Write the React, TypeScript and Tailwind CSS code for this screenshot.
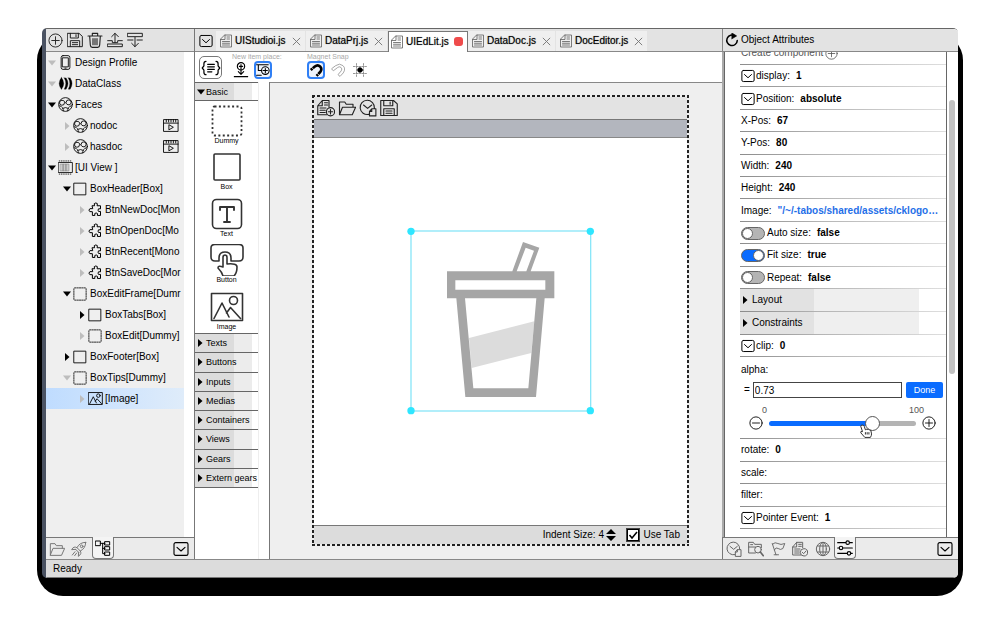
import React from "react";

type SvgProps = { className?: string; children?: React.ReactNode; box?: string; sw?: number };

function Svg({ className = "size-4", children, box = "0 0 24 24", sw = 1.5 }: SvgProps) {
  return (
    <svg viewBox={box} className={`shrink-0 ${className}`} fill="none" stroke="currentColor" strokeWidth={sw} strokeLinejoin="round" strokeLinecap="round" aria-hidden="true">
      {children}
    </svg>
  );
}

const PlusCircle = ({ className }: SvgProps) => (
  <Svg className={className}><circle cx="12" cy="12" r="10.500" /><path d="M12 6v12M6 12h12" /></Svg>
);
const MinusCircle = ({ className }: SvgProps) => (
  <Svg className={className}><circle cx="12" cy="12" r="10.500" /><path d="M6 12h12" /></Svg>
);
const Save = ({ className }: SvgProps) => (
  <Svg className={className}><path d="M1 2h17l5 4.500V22H1zM5 2v7h12V2M13.500 4v3M5 22v-9h14v9M8 16h8M8 19h8" /></Svg>
);
const Trash = ({ className }: SvgProps) => (
  <Svg className={className} sw={1.700}><path d="M1.500 6h21M8 6V2h8v4M4 6l1 14Q5.200 23 8 23h8Q18.800 23 19 20L20 6M9 10v9M12 10v9M15 10v9" /></Svg>
);
const InsertAbove = ({ className }: SvgProps) => (
  <Svg className={className}><path d="M12 16V2M7 7l5-5 5 5M1 13h7v3h8v-3h7M1 18h22v4H1z" /></Svg>
);
const InsertBelow = ({ className }: SvgProps) => (
  <Svg className={className}><path d="M1 2h22v5H1zM1 12h8M15 12h8M12 8v14M7 17l5 5 5-5" /></Svg>
);
const Phone = ({ className }: SvgProps) => (
  <Svg className={className} sw={1.400}><rect x="5" y="1" width="14" height="22" rx="3" /><path d="M7.500 4.500h9v14.500h-9zM11 21h2" /></Svg>
);
const DataClassIcon = ({ className }: SvgProps) => (
  <Svg className={className} sw={0.500}>
    <path fill="currentColor" d="M5.500 2.500Q13 12 5.500 21.500Q-2 12 5.500 2.500zM10 3h3q6 9 0 18h-3q5-9 0-18zM16.500 3h3q6 9 0 18h-3q5-9 0-18z" />
  </Svg>
);
const Face = ({ className }: SvgProps) => (
  <Svg className={className} sw={1.400}><circle cx="12" cy="12" r="11" /><path d="M10.500 9a4 4 0 1 1-2.500-3.500q2.500 1 4 3.500t4 3.500a4 4 0 1 0-3-4M2.500 14q3 .5 4.500 3t1.500 5M21.500 14q-3 .5-4.500 3t-1.500 5M8 18q4-2.500 8 0" /></Svg>
);
const Clip = ({ className }: SvgProps) => (
  <Svg className={className} box="0 0 26 22"><path d="M1 1h24v20H1zM1 7h24M5 1v4M9 1v4M13 1v4M17 1v4M21 1v4M10 10l7 4-7 4z" /></Svg>
);
const ViewIcon = ({ className }: SvgProps) => (
  <Svg className={className} sw={1.300}>
    <rect x="1" y="4" width="22" height="16" /><path fill="#ccc" stroke="#888" strokeWidth="1" d="M4 6.500h4.500v11H4zM8.500 6.500H13v11H8.500zM13 6.500h4.500v11H13z" /><path d="M2 1.500h20M2 22.500h20" strokeDasharray="1 2.500" />
  </Svg>
);
const BoxIcon = ({ className }: SvgProps) => (
  <Svg className={className}><rect x="2" y="2" width="20" height="20" /></Svg>
);
const DummyIcon = ({ className }: SvgProps) => (
  <Svg className={className} sw={1.400}><rect x="1.500" y="1.500" width="21" height="21" rx="1.500" strokeDasharray="2.200 1.800" /></Svg>
);
const Puzzle = ({ className }: SvgProps) => (
  <Svg className={className} sw={1.600}>
    <path d="M7 6h3.500Q8.500 1.500 12.500 1.500T14.500 6H20v5q-4-1.500-4 2t4 2v6.500h-5q1.500-4-2-4t-2 4H7v-6q-5.500 1-5.500-2.500T7 10.500z" />
  </Svg>
);
const ImageIcon = ({ className, sw = 2 }: SvgProps) => (
  <Svg className={className} box="0 0 34 30" sw={sw}><path d="M1.500 1.500h31v27h-31zM4 26.500L12 11l7 14M16.500 21l4-5.500 10 11" /><circle cx="23.500" cy="8.500" r="4" /></Svg>
);
const Chevron = ({ className }: SvgProps) => (
  <Svg className={className} sw={1.700}><rect x="1.500" y="2.500" width="21" height="19" rx="2.500" /><path d="M6 9.500l6 5.500 6-5.500" /></Svg>
);
const DocTab = ({ className }: SvgProps) => (
  <Svg className={className} box="0 0 24 26" sw={1.700}><path d="M10 1h13v24H1V10zM10 1v9H1M14 5h5M14 9h5M5 14h14M5 17.500h14M5 21h14" /></Svg>
);
const Cross = ({ className }: SvgProps) => (
  <Svg className={className} sw={2.500}><path d="M3 3l18 18M21 3L3 21" /></Svg>
);
const DocAdd = ({ className }: SvgProps) => (
  <Svg className={className}><path d="M13 21H1V9l6-7h9v8M7 2v7H1M10 5h4M10 8h4M4 12h8M4 15h7M4 18h7" /><circle cx="18" cy="17" r="5.500" /><path d="M18 14v6M15 17h6" /></Svg>
);
const Folder = ({ className }: SvgProps) => (
  <Svg className={className}><path d="M2 21V4h7l2 3h9v4M2 21l4-10h17.500l-4.500 10z" /></Svg>
);
const Recent = ({ className }: SvgProps) => (
  <Svg className={className}><path d="M13 20.500A9.500 9.500 0 1 1 20.500 12M6 8l5.500 4.500L17 8M14 22.500v-6l3-3.500h5.500v9.500zM17 13v3.500h-3" /></Svg>
);
const Rocket = ({ className }: SvgProps) => (
  <Svg className={className}><path d="M22 2Q13 2 9 10l5 5q8-4 8-13zM9 10Q4 7 1 13l6-.5M14 15q3 4-3 8l.5-6M7 12.500l4.500 4.500M6 16l-4 5M8.500 18l-3 4" /><circle cx="16" cy="8" r="2" /></Svg>
);
const TreeIcon = ({ className }: SvgProps) => (
  <Svg className={className} sw={1.500}><path d="M1 1.500h7v7H1zM15 2.500h7v5h-7zM15 10h7v5h-7zM15 18h7v5h-7zM8 5h7M11.500 5v15.500H15M11.500 12.500H15" /></Svg>
);
const FolderSearch = ({ className }: SvgProps) => (
  <Svg className={className}><path d="M11 18H1V2h7l2 3h10v5M1 9h10M4 5.500h3" /><circle cx="15" cy="13" r="5" /><path d="M18.500 16.500L23 22" strokeWidth="2.500" /></Svg>
);
const Flag = ({ className }: SvgProps) => (
  <Svg className={className}><path d="M2 4l6 18M5 22h7M2.500 5q4-4 8.500-1t11 0l-3 8q-4 3-7.500 0t-6 2" /></Svg>
);
const DocCheck = ({ className }: SvgProps) => (
  <Svg className={className}><path d="M13 21H1V9l6-7h9v8M7 2v7H1M10 5h4M10 8h4M4 12h8M4 15h7M4 18h7" /><circle cx="18" cy="17" r="5.500" /><path d="M15.500 17l2 2 3.500-4" /></Svg>
);
const Globe = ({ className }: SvgProps) => (
  <Svg className={className}><circle cx="12" cy="12" r="10" /><ellipse cx="12" cy="12" rx="5" ry="10" /><path d="M12 2v20M3.500 7.500h17M3.500 16.500h17" /></Svg>
);
const Sliders = ({ className }: SvgProps) => (
  <Svg className={className} sw={1.700}><path d="M1 4h12M19 4h4M1 12h2M9 12h14M1 20h14M21 20h2" /><circle cx="16" cy="4" r="2.600" /><circle cx="6" cy="12" r="2.600" /><circle cx="18" cy="20" r="2.600" /></Svg>
);
const Magnet = ({ className, sw }: SvgProps) => (
  <Svg className={className} sw={sw}><path d="M1.500 9.500L8 4.500q7-5 12.500 0t.5 12.500l-5.500 6-3.500-3 5.500-6.500q2.500-3.500-.5-6t-6 .5L4.500 13z" /></Svg>
);
const BoldMagnet = ({ className }: SvgProps) => (
  <Svg className={className} sw={4.500}><path strokeLinecap="butt" d="M3 12l7-6q5-4 9 0t.5 9L13 22" /><path stroke="#fff" strokeWidth="1.300" d="M4.500 7.500l4 4M12.500 16.500l4.500 4" /></Svg>
);

function Arrow({ open, faint }: { open?: boolean; faint?: boolean }) {
  return (
    <svg viewBox="0 0 10 10" className={`size-[10px] shrink-0 ${faint ? "fill-[#bdbdbd]" : "fill-black"}`} aria-hidden="true">
      {open ? <path d="M1 2.500h8L5 7.500z" /> : <path d="M3 1v8l4.500-4z" />}
    </svg>
  );
}

type Node = { label: string; level: 0 | 1 | 2; icon: React.FC<SvgProps>; open?: boolean; faint?: boolean; clip?: boolean; selected?: boolean };

const tree: Node[] = [
  { label: "Design Profile", level: 0, icon: Phone, open: true, faint: true },
  { label: "DataClass", level: 0, icon: DataClassIcon, open: true, faint: true },
  { label: "Faces", level: 0, icon: Face, open: true },
  { label: "nodoc", level: 1, icon: Face, faint: true, clip: true },
  { label: "hasdoc", level: 1, icon: Face, faint: true, clip: true },
  { label: "[UI View ]", level: 0, icon: ViewIcon, open: true },
  { label: "BoxHeader[Box]", level: 1, icon: BoxIcon, open: true },
  { label: "BtnNewDoc[Mon", level: 2, icon: Puzzle, faint: true },
  { label: "BtnOpenDoc[Mo", level: 2, icon: Puzzle, faint: true },
  { label: "BtnRecent[Mono", level: 2, icon: Puzzle, faint: true },
  { label: "BtnSaveDoc[Mor", level: 2, icon: Puzzle, faint: true },
  { label: "BoxEditFrame[Dumr", level: 1, icon: DummyIcon, open: true },
  { label: "BoxTabs[Box]", level: 2, icon: BoxIcon },
  { label: "BoxEdit[Dummy]", level: 2, icon: DummyIcon, faint: true },
  { label: "BoxFooter[Box]", level: 1, icon: BoxIcon },
  { label: "BoxTips[Dummy]", level: 1, icon: DummyIcon, open: true, faint: true },
  { label: "[Image]", level: 2, icon: ImageIcon, faint: true, selected: true },
];

const indent = { 0: "pl-[1px]", 1: "pl-4", 2: "pl-[31px]" };

function IconButton({ label, children, className = "" }: { label: string; children: React.ReactNode; className?: string }) {
  return <button type="button" aria-label={label} className={`flex items-center justify-center ${className}`}>{children}</button>;
}

function ActiveTab({ label, children }: { label: string; children: React.ReactNode }) {
  return (
    <IconButton label={label} className="-mt-px h-[22px] w-[22px] self-start rounded-b-[4px] border border-t-0 border-[#777] bg-[#f4f4f4]">
      {children}
    </IconButton>
  );
}

function LeftPanel() {
  return (
    <aside className="flex min-h-0 flex-col border-r border-[#777] bg-[#efefef]">
      <div className="flex h-[23px] shrink-0 items-center gap-1 border-b border-[#888] bg-[#e3e3e3] pl-[2px] text-[#222]">
        <IconButton label="Add"><PlusCircle className="size-[15px]" /></IconButton>
        <IconButton label="Save"><Save className="size-4" /></IconButton>
        <IconButton label="Delete"><Trash className="size-4" /></IconButton>
        <IconButton label="Insert above"><InsertAbove className="size-4" /></IconButton>
        <IconButton label="Insert below"><InsertBelow className="size-4" /></IconButton>
      </div>
      <div className="min-h-0 flex-1 overflow-hidden bg-white pr-[10px]">
        <ul className="h-full bg-[#efefef]">
          {tree.map((n) => {
            const Icon = n.icon;
            return (
              <li key={n.label} className={`flex h-[21px] items-center whitespace-nowrap ${indent[n.level]} ${n.selected ? "bg-linear-to-r from-[#bfdcff] to-[#dfecfa]" : ""}`}>
                <Arrow open={n.open} faint={n.faint} />
                <span className="flex w-4 shrink-0 justify-center"><Icon className={n.icon === BoxIcon || n.icon === DummyIcon ? "size-[14px]" : "size-[15px]"} /></span>
                <span className="ml-[2px]">{n.label}</span>
                {n.clip && <IconButton label={`Play ${n.label}`} className="mr-[5px] ml-auto"><Clip className="h-[13px] w-4" /></IconButton>}
              </li>
            );
          })}
        </ul>
      </div>
      <div className="flex h-[22px] shrink-0 items-center border-t border-[#777] bg-[#ebebeb] pl-[2px]">
        <IconButton label="Files" className="w-[18px] text-[#777]"><Folder className="size-4" /></IconButton>
        <IconButton label="Launch" className="mx-1 w-[18px] text-[#777]"><Rocket className="size-4" /></IconButton>
        <ActiveTab label="Structure"><TreeIcon className="size-4" /></ActiveTab>
        <IconButton label="More" className="mr-[5px] ml-auto"><Chevron className="size-4" /></IconButton>
      </div>
    </aside>
  );
}

const files = [
  { name: "UIStudioi.js", width: "w-[90px]" },
  { name: "DataPrj.js", width: "w-[82px]" },
  { name: "UIEdLit.js", width: "w-[80px]", active: true },
  { name: "DataDoc.js", width: "w-[88px]" },
  { name: "DocEditor.js", width: "w-[92px]" },
];

function FileTabs() {
  return (
    <div className="flex h-[23px] shrink-0 items-end border-b border-[#888] bg-[#e3e3e3]">
      <IconButton label="Open file list" className="h-[21px] w-[21px]"><Chevron className="size-[14px]" /></IconButton>
      {files.map((f) => (
        <div key={f.name} className={`flex items-center pr-[4px] ${f.width} ${f.active ? "-mb-px h-[21px] border border-b-0 border-[#777] bg-white pb-px pl-[2px]" : "h-[20px] border-r border-[#e3e3e3] bg-[#efefef] pl-[4px]"}`}>
          <DocTab className="h-[14px] w-3 text-[#666]" />
          <button type="button" className="ml-[3px] [text-shadow:0_0_1px_#0008]">{f.name}</button>
          <IconButton label={`Close ${f.name}`} className="ml-auto">
            {f.active ? <span className="block size-[9px] rounded-[3px] bg-[#ef4b4b]" /> : <Cross className="size-[9px] text-[#777]" />}
          </IconButton>
        </div>
      ))}
    </div>
  );
}

function Toolbar() {
  return (
    <div className="flex h-[30px] shrink-0 bg-white pl-1">
      <IconButton label="Source" className="mt-1 size-[23px] rounded-[5px] border border-[#777]">
        <Svg className="size-5" sw={1.500}><path d="M6 4Q3.500 4 3.500 7v2.500L1.500 12l2 2.500V17q0 3 2.500 3M18 4q2.500 0 2.500 3v2.500l2 2.500-2 2.500V17q0 3-2.500 3M8 7.500h8M8 10.500h8M8 13.500h8M8 16.500h5" /></Svg>
      </IconButton>
      <div className="ml-[10px] w-[75px] pt-px">
        <div className="h-2 text-[7px] leading-[8px] whitespace-nowrap text-[#a9a9a9]">New item place:</div>
        <div className="flex gap-[4px]">
          <IconButton label="Place at centre" className="h-[18px] w-[18px]">
            <Svg className="size-[16px]" sw={1.700}><circle cx="12" cy="6.500" r="5.500" /><path d="M12 4v9M9.500 6.500h5M12 13v4M8 14.500l4 4 4-4M2 22h20" /></Svg>
          </IconButton>
          <IconButton label="Place inside" className="size-[18px] rounded-[4px] border-2 border-[#2f7ff5] bg-[#eef3fb]">
            <Svg className="size-[14px]" sw={1.800}><path d="M1 3h20M4 3v10h6M1 21h8" /><circle cx="16" cy="13" r="6.500" /><path d="M16 9.500v7M12.500 13h7" /></Svg>
          </IconButton>
        </div>
      </div>
      <div className="pt-px">
        <div className="h-2 text-[7px] leading-[8px] whitespace-nowrap text-[#a9a9a9]">Magnet Snap</div>
        <div className="flex gap-[4px]">
          <IconButton label="Strong snap" className="size-[18px] rounded-[4px] border-2 border-[#2f7ff5] bg-[#eef3fb]"><BoldMagnet className="size-[14px]" /></IconButton>
          <IconButton label="Weak snap" className="size-[18px] text-[#999]"><Magnet className="size-[14px]" sw={1.500} /></IconButton>
          <IconButton label="Grid snap" className="size-[18px]">
            <Svg className="size-[14px]" sw={1.500}><path stroke="#888" d="M0 6h24M0 18h24M6 1v22M18 1v22" strokeDasharray="3 2" /><circle cx="12" cy="12" r="4" fill="currentColor" /></Svg>
          </IconButton>
        </div>
      </div>
    </div>
  );
}

const paletteItems = [
  { name: "Dummy", icon: <Svg className="size-8" box="0 0 32 32" sw={1.800}><rect x="1.500" y="1.500" width="29" height="29" rx="2" strokeDasharray="2 2.400" strokeLinecap="butt" /></Svg> },
  { name: "Box", icon: <Svg className="size-8" box="0 0 32 32" sw={1.600}><rect x="3" y="3" width="26" height="26" rx="1" /></Svg> },
  { name: "Text", icon: <Svg className="size-8" box="0 0 32 32" sw={1.600}><rect x="1.500" y="1.500" width="29" height="29" rx="4" /><path d="M9 12V9h14v3M16 9v15M13 24h6" strokeWidth="1.900" /></Svg> },
  { name: "Button", icon: <Svg className="h-8 w-[34px]" box="0 0 34 32" sw={1.600}><path d="M9 17H5q-4 0-4-4V4q0-3.500 4-3.500h24q4 0 4 3.500v9q0 4-4 4h-7M9 17v-3q0-6 6-6t6 6v3M13 23V13.500q0-2.500 2-2.500t2 2.500V20q10-1 10 3 0 6-3 9H13q-1-4-5-8 0-3 5-1z" /></Svg> },
  { name: "Image", icon: <ImageIcon className="h-[30px] w-[34px]" sw={1.600} /> },
];

const sections = ["Texts", "Buttons", "Inputs", "Medias", "Containers", "Views", "Gears", "Extern gears"];
const headFill = "bg-[linear-gradient(to_right,#dcdcdc_62%,#ececec_62%_90%,#fff_90%)]";

function Palette() {
  return (
    <div className="flex w-[75px] shrink-0 flex-col border-r border-[#777] bg-white pr-[10px]">
      <div className="flex-1 border-r border-[#eee] text-[9px]">
        <button type="button" aria-expanded="true" className={`flex h-[19px] w-full items-center border-y border-[#666] pl-px ${headFill}`}>
          <Arrow open /><span>Basic</span>
        </button>
        <div className="flex h-[232px] flex-col">
          {paletteItems.map((p) => (
            <button key={p.name} type="button" className="flex w-full flex-1 flex-col items-center pt-[4px] text-[#333]">
              <span className="flex h-8 items-center">{p.icon}</span>
              <span className="text-[7px] leading-[8px] text-black">{p.name}</span>
            </button>
          ))}
        </div>
        <div className="flex h-[155px] flex-col border-t border-[#666]">
          {sections.map((s) => (
            <button key={s} type="button" aria-expanded="false" className={`flex w-full flex-1 items-center border-b border-[#666] whitespace-nowrap ${headFill}`}>
              <Arrow /><span className="ml-px">{s}</span>
            </button>
          ))}
        </div>
      </div>
    </div>
  );
}

function Drink() {
  return (
    <svg viewBox="17 17 567 567" className="size-[189px]" role="img" aria-label="Drink cup">
      <path fill="#dcdcdc" d="M206 353L402 303L393 398L214 443z" />
      <path fill="#a6a6a6" fillRule="evenodd" d="M140 153H336L368 65L417 82L391 153H462V234H433L407 530H195L168 234H140zM165 180V208H435V180zM349 153H378L401 91L376 82zM194 234L219 504H384L408 234z" />
      <rect x="32" y="32" width="539" height="540" fill="none" stroke="#8ae6f8" strokeWidth="4" />
      <g fill="#2fe6ff">
        <circle cx="32" cy="33" r="11" /><circle cx="570" cy="33" r="11" /><circle cx="32" cy="571" r="11" /><circle cx="570" cy="571" r="11" />
      </g>
    </svg>
  );
}

const dashedFrame =
  "bg-[repeating-linear-gradient(to_right,#222_0_3px,#eee_3px_5px),repeating-linear-gradient(to_right,#222_0_3px,#eee_3px_5px),repeating-linear-gradient(to_bottom,#222_0_3px,#eee_3px_5px),repeating-linear-gradient(to_bottom,#222_0_3px,#eee_3px_5px)] bg-[length:100%_2px,100%_2px,2px_100%,2px_100%] bg-[position:top,bottom,left,right] bg-no-repeat";

function Canvas() {
  return (
    <div className="flex min-w-0 flex-1 flex-col border-t border-[#888] bg-[#efefef] pt-[12px] pr-[33px] pb-[13px] pl-[42px]">
      <div className={`flex flex-1 flex-col p-[2px] ${dashedFrame}`}>
        <div className="flex h-[23px] shrink-0 items-center gap-[3px] border-b border-[#777] bg-[#e3e3e3] pl-[3px] text-[#222]">
          <IconButton label="New document"><DocAdd className="size-[18px]" /></IconButton>
          <IconButton label="Open document"><Folder className="size-[18px]" /></IconButton>
          <IconButton label="Recent documents"><Recent className="size-[18px]" /></IconButton>
          <IconButton label="Save document"><Save className="size-[18px]" /></IconButton>
        </div>
        <div className="h-[18px] shrink-0 border-b border-[#888] bg-[#b3b6be]" />
        <div className="flex flex-1 justify-center bg-white pt-[88px]"><Drink /></div>
        <div className="flex h-[19px] shrink-0 items-center justify-end border-t border-[#777] bg-[#dcdcdc] pr-[7px]">
          <label htmlFor="indent">Indent Size:</label>
          <input id="indent" type="text" inputMode="numeric" defaultValue="4" className="ml-[3px] w-[7px] bg-transparent" />
          <svg viewBox="0 0 10 12" className="ml-px h-3 w-[10px]" aria-hidden="true"><path d="M0 5L5 0l5 5zM0 7h10l-5 5z" /></svg>
          <label className="ml-[11px] flex items-center gap-1">
            <span className="relative flex size-3">
              <input type="checkbox" defaultChecked className="peer size-3 appearance-none border border-black bg-white outline outline-[#444]" />
              <svg viewBox="0 0 12 12" className="pointer-events-none absolute inset-0 hidden size-3 peer-checked:block" fill="none" stroke="#000" strokeWidth="1.500" aria-hidden="true"><path d="M2.500 6l2.500 3 5-6" /></svg>
            </span>
            Use Tab
          </label>
        </div>
      </div>
    </div>
  );
}

const rowLine = "bg-[linear-gradient(to_right,#8c8c8c,#b5b5b5_40%,#dedede)] bg-[length:100%_1px] bg-bottom bg-no-repeat";

function Attr({ name, value, menu, link }: { name: string; value?: string; menu?: boolean; link?: boolean }) {
  return (
    <div className={`flex min-h-0 flex-1 items-center pl-px whitespace-nowrap ${rowLine}`}>
      {menu && <IconButton label={`Choose ${name}`} className="mr-px"><Chevron className="size-[14px]" /></IconButton>}
      <span>{name}:</span>
      {value && (link ? <a href="#image" className="ml-[6px] font-bold text-[#1f6fe8]">{value}</a> : <b className="ml-[6px]">{value}</b>)}
    </div>
  );
}

function Toggle({ name, on }: { name: string; on?: boolean }) {
  return (
    <label className={`flex min-h-0 flex-1 items-center pl-px whitespace-nowrap ${rowLine}`}>
      <input
        type="checkbox"
        defaultChecked={on}
        className="mr-[2px] h-[13px] w-6 appearance-none rounded-full border border-[#666] bg-[#b4b4b4] before:block before:size-[11px] before:rounded-full before:border before:border-[#666] before:bg-white checked:bg-[#0a6cff] checked:before:ml-[11px]"
      />
      <span>{name}:</span>
      <b className="ml-[6px]">{on ? "true" : "false"}</b>
    </label>
  );
}

function Group({ name }: { name: string }) {
  return (
    <div className={`h-[23px] pb-px ${rowLine}`}>
      <button type="button" aria-expanded="false" className="flex h-full w-full items-center bg-[linear-gradient(to_right,#e2e2e2_36%,#efefef_36%_87%,#fff_87%)]">
        <Arrow /><span className="ml-[2px]">{name}</span>
      </button>
    </div>
  );
}

function RightPanel() {
  return (
    <aside className="flex min-h-0 flex-col bg-white">
      <div className="flex h-[23px] shrink-0 items-center border-b border-l border-[#888] bg-[#e3e3e3] pl-[2px]">
        <IconButton label="Refresh">
          <Svg className="size-[14px]" sw={2.600}><path d="M17 5A9 9 0 1 0 21 13" /><path fill="currentColor" strokeWidth="1" d="M12 0l8 5-8 5z" /></Svg>
        </IconButton>
        <h2 className="ml-[2px]">Object Attributes</h2>
      </div>
      <div className="flex min-h-0 flex-1 border-l-2 border-[#aaa]">
        <div className="min-h-0 flex-1 overflow-hidden border-x border-[#666] pl-[15px]">
          <div className="-mt-[10px] flex h-[22px] items-center pl-px text-[#555]">
            Create component<IconButton label="Create component" className="ml-[2px]"><PlusCircle className="size-[13px]" /></IconButton>
          </div>
          <div className={`h-px ${rowLine}`} />
          <div className="flex h-[224px] flex-col">
            <Attr name="display" value="1" menu />
            <Attr name="Position" value="absolute" menu />
            <Attr name="X-Pos" value="67" />
            <Attr name="Y-Pos" value="80" />
            <Attr name="Width" value="240" />
            <Attr name="Height" value="240" />
            <Attr name="Image" value={'"/~/-tabos/shared/assets/cklogo…'} link />
            <Toggle name="Auto size" />
            <Toggle name="Fit size" on />
            <Toggle name="Repeat" />
          </div>
          <Group name="Layout" />
          <Group name="Constraints" />
          <div className="flex h-[22px] flex-col"><Attr name="clip" value="0" menu /></div>
          <div className={`h-[82px] ${rowLine}`}>
            <label htmlFor="alpha" className="flex h-[25px] items-center pl-px">alpha:</label>
            <div className="flex h-4 items-center pr-[3px] pl-1">
              <span>=</span>
              <input id="alpha" type="text" defaultValue="0.73" className="ml-[3px] h-4 min-w-0 flex-1 border border-[#444] bg-white px-px" />
              <button type="button" className="ml-1 h-4 w-[37px] rounded-[2px] bg-[#0a6cff] text-[9px] text-white">Done</button>
            </div>
            <div className="mt-[7px] flex justify-between pr-[22px] pl-[22px] text-[9px] leading-[10px] text-[#555]"><span>0</span><span>100</span></div>
            <div className="relative mt-px flex items-center justify-between pr-[10px] pl-[9px]">
              <IconButton label="Decrease alpha"><MinusCircle className="size-[14px]" /></IconButton>
              <input
                type="range"
                aria-label="Alpha"
                defaultValue={73}
                className="mx-[6px] h-[5px] min-w-0 flex-1 appearance-none rounded-full bg-[linear-gradient(to_right,#0a6cff_71%,#b4b4b4_71%)] [&::-webkit-slider-thumb]:size-[15px] [&::-webkit-slider-thumb]:appearance-none [&::-webkit-slider-thumb]:rounded-full [&::-webkit-slider-thumb]:border [&::-webkit-slider-thumb]:border-[#555] [&::-webkit-slider-thumb]:bg-white"
              />
              <IconButton label="Increase alpha"><PlusCircle className="size-[14px]" /></IconButton>
              <svg viewBox="0 0 24 24" className="pointer-events-none absolute top-[8px] left-[58%] size-[14px]" fill="#fff" stroke="#222" strokeWidth="1.600" strokeLinejoin="round" aria-hidden="true">
                <path d="M5 2q3-1 4 2l2 6q1-2 3-.5Q16 8 17.500 10q2.500-.5 3 2l1 5q0 3-2 6H10l-7-8q-1-3 3-2L3 4q0-2 2-2zM11 14v4M14 14v4M17 14v4" />
              </svg>
            </div>
          </div>
          <div className="flex h-[90px] flex-col">
            <Attr name="rotate" value="0" />
            <Attr name="scale" />
            <Attr name="filter" />
            <Attr name="Pointer Event" value="1" menu />
          </div>
        </div>
        <div className="w-[11px] shrink-0 px-[2px] pt-12"><div className="h-[274px] w-[6px] rounded-full bg-[#c1c1c1]" /></div>
      </div>
      <div className="flex h-[22px] shrink-0 items-center border-t border-l border-[#777] bg-[#ebebeb] pl-[3px] text-[#666]">
        <IconButton label="History" className="w-4"><Recent className="size-4" /></IconButton>
        <IconButton label="Search files" className="ml-[6px] w-4"><FolderSearch className="size-4" /></IconButton>
        <IconButton label="Flags" className="ml-[6px] w-4"><Flag className="size-[15px]" /></IconButton>
        <IconButton label="Checks" className="ml-[6px] w-4"><DocCheck className="size-4" /></IconButton>
        <IconButton label="Web" className="mr-[3px] ml-[7px] w-4"><Globe className="size-4" /></IconButton>
        <div className="flex self-stretch text-black"><ActiveTab label="Attributes"><Sliders className="size-4" /></ActiveTab></div>
        <IconButton label="More" className="mr-[5px] ml-auto text-black"><Chevron className="size-4" /></IconButton>
      </div>
    </aside>
  );
}

export default function App() {
  return (
    <div className="h-screen bg-white pt-7 pr-[42px] pb-[55px] pl-[42px] font-['Liberation_Sans',Arial,sans-serif] text-[10px] leading-[14px] text-black">
      <div className="relative isolate h-full">
        <div className="absolute -inset-x-[5px] top-[6px] -bottom-[18px] -z-10 rounded-[26px] bg-black" />
        <div className="flex h-full flex-col overflow-hidden rounded-[5px] border-t border-l-4 border-t-[#666] border-l-[#4a5262] bg-white">
          <div className="grid min-h-0 flex-1 grid-cols-[149px_minmax(0,1fr)_236px]">
            <LeftPanel />
            <main className="flex min-h-0 min-w-0 flex-col">
              <FileTabs />
              <Toolbar />
              <div className="flex min-h-0 flex-1">
                <Palette />
                <Canvas />
              </div>
            </main>
            <RightPanel />
          </div>
          <footer className="flex h-[19px] shrink-0 items-center border-y border-t-[#888] border-b-[#777] bg-[#dcdcdc] pl-[7px]">Ready</footer>
        </div>
      </div>
    </div>
  );
}
